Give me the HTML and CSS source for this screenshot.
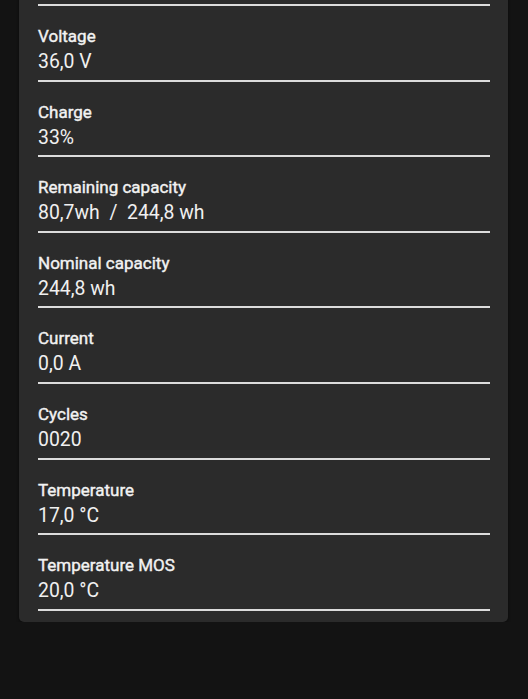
FILE: index.html
```html
<!DOCTYPE html>
<html lang="en">
<head>
  <meta charset="UTF-8" />
  <meta name="viewport" content="width=device-width, initial-scale=1.0"/>
  <title>Battery - Details</title>
  <link rel="stylesheet" href="styles.css">
</head>
<body>

  <!-- 🔋 Battery details card -->
  <div class="card">
    <div class="card-top"></div>

    <div class="row">
      <div class="label">Voltage</div>
      <div class="value">36,0 V</div>
    </div>

    <div class="row">
      <div class="label">Charge</div>
      <div class="value">33%</div>
    </div>

    <div class="row">
      <div class="label">Remaining capacity</div>
      <div class="value">80,7wh &nbsp;/ &nbsp;244,8 wh</div>
    </div>

    <div class="row">
      <div class="label">Nominal capacity</div>
      <div class="value">244,8 wh</div>
    </div>

    <div class="row">
      <div class="label">Current</div>
      <div class="value">0,0 A</div>
    </div>

    <div class="row">
      <div class="label">Cycles</div>
      <div class="value">0020</div>
    </div>

    <div class="row">
      <div class="label">Temperature</div>
      <div class="value">17,0 °C</div>
    </div>

    <div class="row">
      <div class="label">Temperature MOS</div>
      <div class="value">20,0 °C</div>
    </div>
  </div>

</body>
</html>
```

FILE: styles.css
```css
body {
  font-family: Roboto, 'Noto Sans', sans-serif;
  background: #131313;
  color: #f0f0f0;
  margin: 0;
  padding: 0;
  overflow: hidden;
}

.card {
  background: #2b2b2b;
  margin: -20px 20px 0 19px;
  padding: 0 18px 11px 19px;
  border-radius: 0 0 5px 5px;
  box-shadow: 0 1px 3px rgba(0, 0, 0, 0.5);
}

.card-top {
  height: 24px;
  border-bottom: 2px solid #dcdcdc;
}

.row {
  padding: 20px 0 5.6px;
  border-bottom: 2px solid #dcdcdc;
}

.label {
  font-size: 17px;
  line-height: 20px;
  font-weight: 400;
  -webkit-text-stroke: 0.4px #f2f2f2;
  color: #f2f2f2;
}

.value {
  margin-top: 4px;
  font-size: 19.4px;
  line-height: 24px;
  color: #f0f0f0;
}
```
